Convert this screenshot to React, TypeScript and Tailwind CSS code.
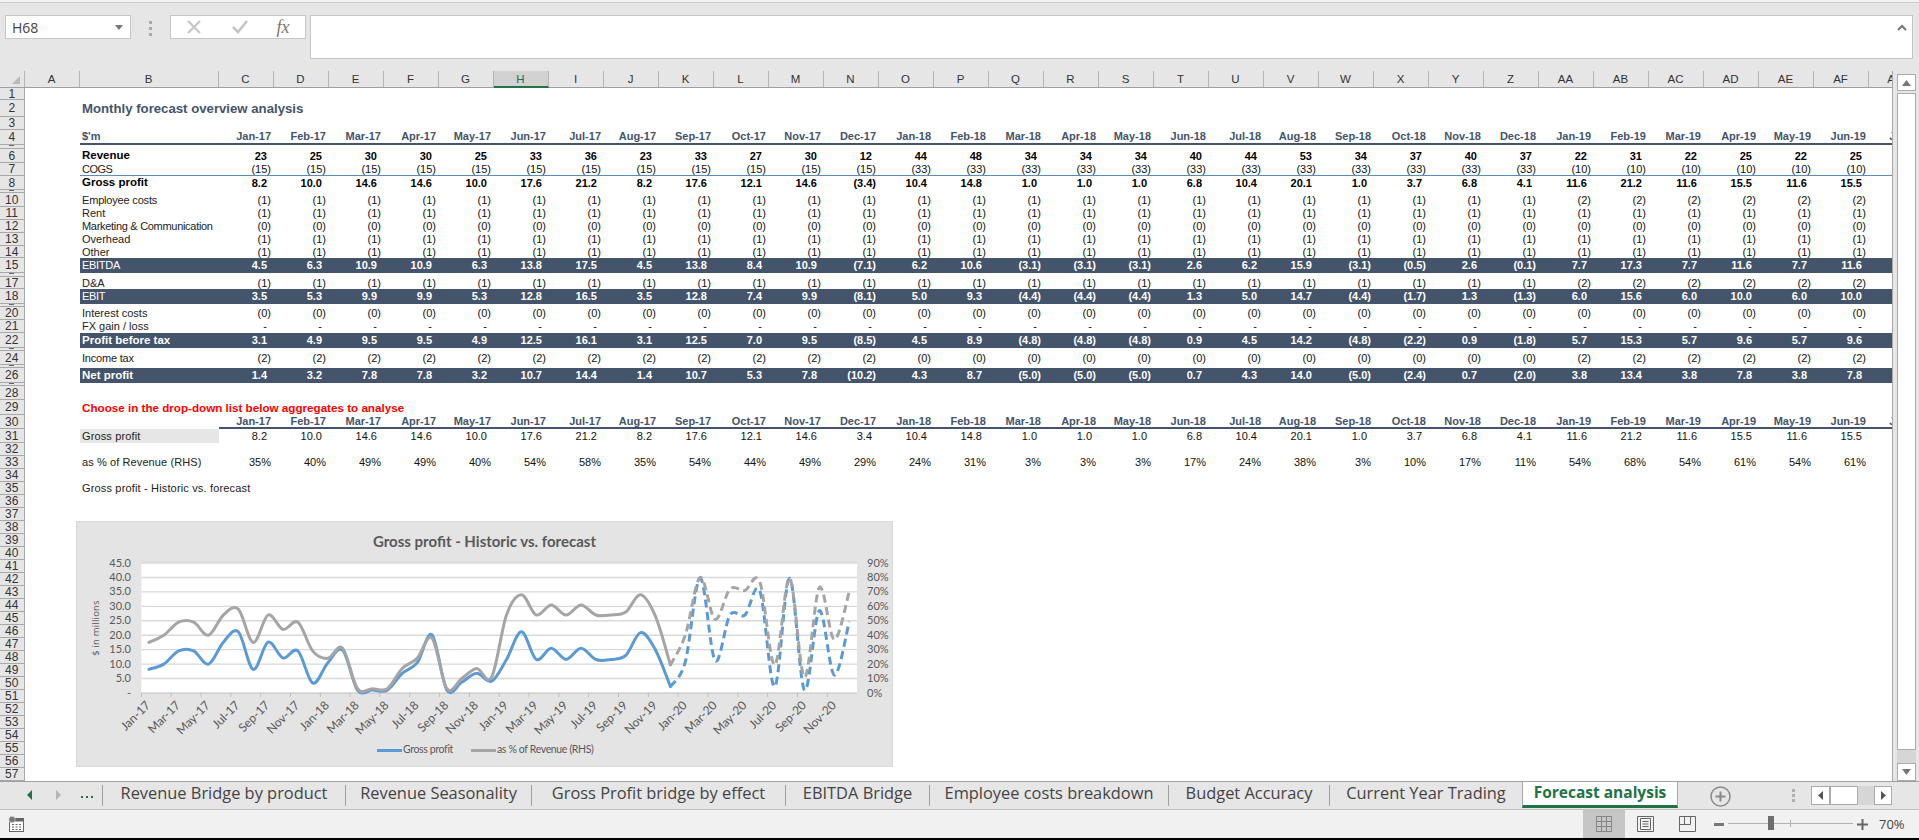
const MONTHS = [
  'Jan-17', 'Feb-17', 'Mar-17', 'Apr-17', 'May-17', 'Jun-17', 'Jul-17', 'Aug-17', 'Sep-17', 'Oct-17', 'Nov-17', 'Dec-17',
  'Jan-18', 'Feb-18', 'Mar-18', 'Apr-18', 'May-18', 'Jun-18', 'Jul-18', 'Aug-18', 'Sep-18', 'Oct-18', 'Nov-18', 'Dec-18',
  'Jan-19', 'Feb-19', 'Mar-19', 'Apr-19', 'May-19', 'Jun-19', 'Jul-19',
];

const COLUMNS = [
  'C', 'D', 'E', 'F', 'G', 'H', 'I', 'J', 'K', 'L', 'M', 'N', 'O', 'P', 'Q', 'R', 'S', 'T', 'U', 'V', 'W', 'X', 'Y', 'Z',
  'AA', 'AB', 'AC', 'AD', 'AE', 'AF', 'AG',
];

const rep = (v: string, n: number) => Array<string>(n).fill(v);
const split = (s: string) => s.split(' ');

const GROSS = split('8.2 10.0 14.6 14.6 10.0 17.6 21.2 8.2 17.6 12.1 14.6 (3.4) 10.4 14.8 1.0 1.0 1.0 6.8 10.4 20.1 1.0 3.7 6.8 4.1 11.6 21.2 11.6 15.5 11.6 15.5');
const PCT = [35, 40, 49, 49, 40, 54, 58, 35, 54, 44, 49, 29, 24, 31, 3, 3, 3, 17, 24, 38, 3, 10, 17, 11, 54, 68, 54, 61, 54, 61];

type Kind = 'blank' | 'title' | 'dates' | 'bold' | 'plain' | 'band' | 'bandBold' | 'red' | 'dates2' | 'select';

interface Row {
  n: number;
  h: string;
  kind: Kind;
  label?: string;
  vals?: string[];
  line?: boolean;
  track?: string;
  tiny?: boolean;
}

const blank = (n: number, h: string): Row => ({ n, h, kind: 'blank' });
const tiny = (n: number, h: string): Row => ({ n, h, kind: 'blank', tiny: true });

const ROWS: Row[] = [
  blank(1, 'h-[12px]'),
  { n: 2, h: 'h-[17px]', kind: 'title', label: 'Monthly forecast overview analysis' },
  blank(3, 'h-[13px]'),
  { n: 4, h: 'h-[15px]', kind: 'dates', label: "$'m", vals: MONTHS },
  tiny(5, 'h-[4px]'),
  { n: 6, h: 'h-[14px]', kind: 'bold', label: 'Revenue', vals: split('23 25 30 30 25 33 36 23 33 27 30 12 44 48 34 34 34 40 44 53 34 37 40 37 22 31 22 25 22 25') },
  { n: 7, h: 'h-[13px]', kind: 'plain', label: 'COGS', line: true, track: 'tracking-[-0.5px]', vals: [...rep('(15)', 12), ...rep('(33)', 12), ...rep('(10)', 6)] },
  { n: 8, h: 'h-[14px]', kind: 'bold', label: 'Gross profit', vals: GROSS },
  tiny(9, 'h-[3px]'),
  { n: 10, h: 'h-[14px]', kind: 'plain', label: 'Employee costs', track: 'tracking-[-0.18px]', vals: [...rep('(1)', 24), ...rep('(2)', 6)] },
  { n: 11, h: 'h-[13px]', kind: 'plain', label: 'Rent', vals: rep('(1)', 30) },
  { n: 12, h: 'h-[13px]', kind: 'plain', label: 'Marketing & Communication', track: 'tracking-[-0.3px]', vals: rep('(0)', 30) },
  { n: 13, h: 'h-[13px]', kind: 'plain', label: 'Overhead', vals: rep('(1)', 30) },
  { n: 14, h: 'h-[12px]', kind: 'plain', label: 'Other', vals: rep('(1)', 30) },
  { n: 15, h: 'h-[15px]', kind: 'band', label: 'EBITDA', vals: split('4.5 6.3 10.9 10.9 6.3 13.8 17.5 4.5 13.8 8.4 10.9 (7.1) 6.2 10.6 (3.1) (3.1) (3.1) 2.6 6.2 15.9 (3.1) (0.5) 2.6 (0.1) 7.7 17.3 7.7 11.6 7.7 11.6') },
  tiny(16, 'h-[4px]'),
  { n: 17, h: 'h-[12px]', kind: 'plain', label: 'D&A', vals: [...rep('(1)', 24), ...rep('(2)', 6)] },
  { n: 18, h: 'h-[15px]', kind: 'band', label: 'EBIT', vals: split('3.5 5.3 9.9 9.9 5.3 12.8 16.5 3.5 12.8 7.4 9.9 (8.1) 5.0 9.3 (4.4) (4.4) (4.4) 1.3 5.0 14.7 (4.4) (1.7) 1.3 (1.3) 6.0 15.6 6.0 10.0 6.0 10.0') },
  tiny(19, 'h-[3px]'),
  { n: 20, h: 'h-[13px]', kind: 'plain', label: 'Interest costs', vals: rep('(0)', 30) },
  { n: 21, h: 'h-[13px]', kind: 'plain', label: 'FX gain / loss', vals: rep('-', 30) },
  { n: 22, h: 'h-[15px]', kind: 'bandBold', label: 'Profit before tax', vals: split('3.1 4.9 9.5 9.5 4.9 12.5 16.1 3.1 12.5 7.0 9.5 (8.5) 4.5 8.9 (4.8) (4.8) (4.8) 0.9 4.5 14.2 (4.8) (2.2) 0.9 (1.8) 5.7 15.3 5.7 9.6 5.7 9.6') },
  tiny(23, 'h-[3px]'),
  { n: 24, h: 'h-[14px]', kind: 'plain', label: 'Income tax', track: 'tracking-[-0.2px]', vals: [...rep('(2)', 12), ...rep('(0)', 12), ...rep('(2)', 6)] },
  tiny(25, 'h-[3px]'),
  { n: 26, h: 'h-[15px]', kind: 'bandBold', label: 'Net profit', vals: split('1.4 3.2 7.8 7.8 3.2 10.7 14.4 1.4 10.7 5.3 7.8 (10.2) 4.3 8.7 (5.0) (5.0) (5.0) 0.7 4.3 14.0 (5.0) (2.4) 0.7 (2.0) 3.8 13.4 3.8 7.8 3.8 7.8') },
  tiny(27, 'h-[3px]'),
  blank(28, 'h-[14px]'),
  { n: 29, h: 'h-[15px]', kind: 'red', label: 'Choose in the drop-down list below aggregates to analyse' },
  { n: 30, h: 'h-[14px]', kind: 'dates2', vals: MONTHS },
  { n: 31, h: 'h-[14px]', kind: 'select', label: 'Gross profit', track: 'tracking-[0.13px]', vals: GROSS.map((v) => v.replace(/[()]/g, '')) },
  blank(32, 'h-[13px]'),
  { n: 33, h: 'h-[13px]', kind: 'plain', label: 'as % of Revenue (RHS)', track: 'tracking-[0.1px]', vals: PCT.map((p) => `${p}%`) },
  blank(34, 'h-[13px]'),
  { n: 35, h: 'h-[13px]', kind: 'plain', label: 'Gross profit - Historic vs. forecast', track: 'tracking-[0.16px]' },
  ...Array.from({ length: 22 }, (_, i) => blank(36 + i, 'h-[13px]')),
];

function Cell({ value, kind }: { value?: string; kind: Kind }) {
  const tight = !value || /[)%]$/.test(value) || kind === 'dates' || kind === 'dates2';
  const isBand = kind === 'band' || kind === 'bandBold';
  return (
    <div
      className={`flex w-[55px] shrink-0 items-center justify-end whitespace-nowrap ${tight ? 'pr-[2.5px]' : 'pr-[6.5px]'} ${
        isBand ? 'bg-[#44546a] font-bold text-white' : ''
      } ${kind === 'bold' ? 'font-bold text-black' : ''} ${kind === 'plain' || kind === 'select' ? 'text-[#111]' : ''} ${
        kind === 'dates' || kind === 'dates2' ? 'border-b-2 border-[#44546a] font-bold text-[#44546a]' : ''
      }`}
    >
      {value}
    </div>
  );
}

function SheetRow({ row }: { row: Row }) {
  const { kind } = row;
  const isBand = kind === 'band' || kind === 'bandBold';
  return (
    <div className={`flex ${row.h} text-[11px] leading-none`}>
      <div
        className={`flex w-[24.5px] shrink-0 justify-center overflow-hidden border-r border-b border-[#a8a8a8] bg-[#e6e6e6] text-[12px] text-[#333] ${
          row.tiny ? 'items-start' : 'items-center'
        }`}
      >
        {row.tiny ? <span className="h-px w-[5px] bg-[#666]" /> : row.n}
      </div>
      <div className="w-[55px] shrink-0" />
      <div
        className={`flex w-[139px] shrink-0 items-center whitespace-nowrap pl-[2.5px] ${row.track ?? ''} ${
          row.line ? 'border-b border-[#5b8db8]' : ''
        } ${kind === 'plain' || kind === 'select' ? 'text-[#222]' : ''} ${kind === 'select' ? 'bg-[#e6e6e6]' : ''} ${
          kind === 'bold' ? 'text-[11.5px] font-bold text-black' : ''
        } ${kind === 'title' ? 'text-[13.2px] font-bold text-[#44546a]' : ''} ${
          kind === 'dates' ? 'border-b-2 border-[#44546a] font-bold text-[#44546a]' : ''
        } ${isBand ? 'bg-[#44546a] text-white' : ''} ${kind === 'band' ? 'tracking-[-0.3px]' : ''} ${kind === 'bandBold' ? 'text-[11.5px] font-bold' : ''} ${
          kind === 'red' ? 'text-[11.65px] font-bold text-[#ff0000]' : ''
        }`}
      >
        {row.label}
      </div>
      {row.vals?.map((v, i) => (
        <div key={i} className={`flex ${row.line ? 'border-b border-[#5b8db8]' : ''}`}>
          <Cell value={v} kind={kind} />
        </div>
      ))}
      {row.vals && row.vals.length < 31 && (
        <div className={`w-[55px] shrink-0 ${isBand ? 'bg-[#44546a]' : ''} ${row.line ? 'border-b border-[#5b8db8]' : ''}`} />
      )}
    </div>
  );
}

function ColumnHeader() {
  return (
    <div className="flex h-[17px] shrink-0 border-b border-[#9f9f9f] bg-[#e6e6e6] text-[11.5px] leading-[16px] text-[#333]">
      <div className="relative w-[24.5px] shrink-0 border-r border-[#b4b4b4]">
        <svg className="absolute left-[11px] top-[4px]" width="10" height="10" viewBox="0 0 10 10">
          <polygon points="9,1 9,9 1,9" fill="#b9b9b9" />
        </svg>
      </div>
      <div className="w-[55px] shrink-0 border-r border-[#b4b4b4] text-center">A</div>
      <div className="w-[139px] shrink-0 border-r border-[#b4b4b4] text-center">B</div>
      {COLUMNS.map((c) => (
        <div
          key={c}
          className={`w-[55px] shrink-0 border-r border-[#b4b4b4] text-center ${
            c === 'H' ? 'h-[17px] border-b-2 border-b-[#217346] bg-[#d2d2d2] text-[#217346]' : ''
          }`}
        >
          {c}
        </div>
      ))}
    </div>
  );
}

/* ---- chart ---- */

const GP_ALL = [
  8.2, 10, 14.6, 14.6, 10, 17.6, 21.2, 8.2, 17.6, 12.1, 14.6, 3.4, 10.4, 14.8, 1, 1, 1, 6.8, 10.4, 20.1, 1, 3.7, 6.8, 4.1,
  11.6, 21.2, 11.6, 15.5, 11.6, 15.5, 11.6, 11.6, 13, 20.9, 14.9, 2.2, 10.8, 39.8, 11.2, 27, 27, 35.4, 2.2, 39.7, 1, 28.5, 6.2, 24.7,
];
const PCT_ALL = [
  ...PCT, 54, 54, 56, 68, 53, 19.4, 40, 80, 51, 72, 71, 77, 19.4, 79.5, 11, 73, 37, 70,
];

const px = (i: number) => 148.9 + 14.9 * i;
const gy = (v: number) => 693 - (v / 45) * 130;
const py = (p: number) => 693 - (p / 90) * 130;

function smooth(points: [number, number][]) {
  let d = `M${points[0][0]},${points[0][1]}`;
  for (let i = 0; i < points.length - 1; i++) {
    const p0 = points[i - 1] ?? points[i];
    const p1 = points[i];
    const p2 = points[i + 1];
    const p3 = points[i + 2] ?? p2;
    d += ` C${p1[0] + (p2[0] - p0[0]) / 6},${p1[1] + (p2[1] - p0[1]) / 6} ${p2[0] - (p3[0] - p1[0]) / 6},${p2[1] - (p3[1] - p1[1]) / 6} ${p2[0]},${p2[1]}`;
  }
  return d;
}

const gpPts = GP_ALL.map((v, i) => [px(i), gy(v)] as [number, number]);
const pctPts = PCT_ALL.map((v, i) => [px(i), py(v)] as [number, number]);

const X_LABELS = [
  'Jan-17', 'Mar-17', 'May-17', 'Jul-17', 'Sep-17', 'Nov-17', 'Jan-18', 'Mar-18', 'May-18', 'Jul-18', 'Sep-18', 'Nov-18',
  'Jan-19', 'Mar-19', 'May-19', 'Jul-19', 'Sep-19', 'Nov-19', 'Jan-20', 'Mar-20', 'May-20', 'Jul-20', 'Sep-20', 'Nov-20',
];
const LEFT_TICKS = ['-', '5.0', '10.0', '15.0', '20.0', '25.0', '30.0', '35.0', '40.0', '45.0'];

function Chart() {
  return (
    <div className="absolute left-[76px] top-[450px] flex h-[246px] w-[817px] flex-col border border-[#d9d9d9] bg-[#e4e4e4] font-['Lato',sans-serif]">
      <div className="h-[36px] pt-[10px] text-center text-[15px] font-bold leading-[18px] text-[#595959]">
        Gross profit - Historic vs. forecast
      </div>
      <svg width="815" height="184" viewBox="77 558 815 184" className="block shrink-0" fontFamily="Lato, sans-serif" fill="#595959">
        <rect x="141.4" y="563" width="715.6" height="130" fill="#fff" />
        {LEFT_TICKS.map((t, i) => {
          const y = 693 - i * 14.444;
          return (
            <g key={t}>
              {i > 0 && <line x1="141.4" x2="857" y1={y} y2={y} stroke="#d9d9d9" strokeWidth="1.4" />}
              <text x="131" y={y + 3.5} fontSize="11" textAnchor="end">{t}</text>
              <text x="867" y={y + 3.5} fontSize="11">{`${i * 10}%`}</text>
            </g>
          );
        })}
        <line x1="141.4" x2="857" y1="693" y2="693" stroke="#bfbfbf" />
        {X_LABELS.map((l, i) => (
          <g key={l}>
            <line x1={141.4 + i * 29.82} x2={141.4 + i * 29.82} y1="693" y2="697" stroke="#bfbfbf" />
            <text
              x={151 + i * 29.82}
              y={706}
              fontSize="12"
              textAnchor="end"
              transform={`rotate(-45 ${151 + i * 29.82} 706)`}
            >
              {l}
            </text>
          </g>
        ))}
        <text x="99" y="628" fontSize="9.5" letterSpacing="0.2" textAnchor="middle" transform="rotate(-90 99 628)" fontFamily="'Open Sans', sans-serif">
          $ in millions
        </text>
        <path d={smooth(gpPts.slice(0, 36))} fill="none" stroke="#5b9bd5" strokeWidth="3" strokeLinecap="round" />
        <path d={smooth(gpPts.slice(35))} fill="none" stroke="#5b9bd5" strokeWidth="3" strokeDasharray="8 4.5" />
        <path d={smooth(pctPts.slice(0, 36))} fill="none" stroke="#a5a5a5" strokeWidth="3" strokeLinecap="round" />
        <path d={smooth(pctPts.slice(35))} fill="none" stroke="#a5a5a5" strokeWidth="3" strokeDasharray="8 4.5" />
      </svg>
      <div className="ml-[300px] mt-[1px] flex h-[14px] items-center text-[10.5px] tracking-[-0.35px] text-[#595959]">
        <span className="h-[3px] w-[25px] bg-[#5b9bd5]" />
        <span className="ml-[1px] w-[68px]">Gross profit</span>
        <span className="h-[3px] w-[25px] bg-[#a5a5a5]" />
        <span className="ml-[1px]">as % of Revenue (RHS)</span>
      </div>
    </div>
  );
}

/* ---- chrome ---- */

function FormulaBar() {
  return (
    <div className="shrink-0">
      <div className="h-[3px] border-b border-[#cfcfcf] bg-[#f1f1f1]" />
      <div className="flex h-[68px] items-start bg-[#e6e6e6] pl-[5px] pt-[12px]">
        <div className="flex h-[24px] w-[126px] items-center justify-between border border-[#c6c6c6] bg-white pl-[6px] pr-[7px] font-['Open_Sans',sans-serif] text-[14px] text-[#444]">
          H68
          <svg width="8" height="5" viewBox="0 0 8 5">
            <polygon points="0,0 8,0 4,5" fill="#777" />
          </svg>
        </div>
        <div className="ml-[18px] mr-[18px] mt-[6px] flex flex-col gap-[3px]">
          <span className="h-[3px] w-[2.5px] bg-[#aaa]" />
          <span className="h-[3px] w-[2.5px] bg-[#aaa]" />
          <span className="h-[3px] w-[2.5px] bg-[#aaa]" />
        </div>
        <div className="flex h-[24px] w-[136px] items-center border border-[#c6c6c6] bg-white pl-[16px]">
          <svg width="14" height="14" viewBox="0 0 14 14" fill="none" stroke="#c4c4c4" strokeWidth="2">
            <path d="M1 1 13 13M13 1 1 13" />
          </svg>
          <svg className="ml-[31px]" width="16" height="14" viewBox="0 0 16 14" fill="none" stroke="#c4c4c4" strokeWidth="2.6">
            <path d="M1 7 6 12 15 1" />
          </svg>
          <span className="ml-[29px] font-['Liberation_Serif',serif] text-[18px] italic leading-none text-[#777]">fx</span>
        </div>
        <div className="ml-[4px] flex h-[44px] w-[1603px] justify-end border border-[#c6c6c6] bg-white pr-[5px] pt-[8px]">
          <svg width="10" height="7" viewBox="0 0 10 7" fill="none" stroke="#777" strokeWidth="2">
            <path d="M1 6 5 2 9 6" />
          </svg>
        </div>
      </div>
    </div>
  );
}

function VerticalScrollbar() {
  return (
    <div className="flex h-[710px] w-[26px] shrink-0 flex-col bg-[#e6e6e6] pl-[4px] pr-[3px] pt-[3px]">
      <div className="flex h-[17px] items-center justify-center border border-[#ababab] bg-white">
        <svg width="9" height="6" viewBox="0 0 9 6">
          <polygon points="0,6 9,6 4.5,0" fill="#777" />
        </svg>
      </div>
      <div className="mt-[2px] h-[657px] border border-[#ababab] bg-white" />
      <div className="h-[13px] bg-[#d6d6d6]" />
      <div className="flex h-[18px] items-center justify-center border border-[#ababab] bg-white">
        <svg width="9" height="6" viewBox="0 0 9 6">
          <polygon points="0,0 9,0 4.5,6" fill="#777" />
        </svg>
      </div>
    </div>
  );
}

const TABS = [
  { label: 'Revenue Bridge by product', w: 'w-[243px]' },
  { label: 'Revenue Seasonality', w: 'w-[186px]' },
  { label: 'Gross Profit bridge by effect', w: 'w-[254px]' },
  { label: 'EBITDA Bridge', w: 'w-[144px]' },
  { label: 'Employee costs breakdown', w: 'w-[239px]' },
  { label: 'Budget Accuracy', w: 'w-[161px]' },
  { label: 'Current Year Trading', w: 'w-[193px]' },
];

function TabBar() {
  return (
    <div className="flex h-[29px] shrink-0 items-start border-t border-[#a0a0a0] border-b border-b-[#c0c0c0] bg-[#e6e6e6] font-['Open_Sans',sans-serif]">
      <div className="relative flex h-[26px] w-[102px] shrink-0 items-center pl-[27px]">
        <svg width="5" height="10" viewBox="0 0 5 10">
          <polygon points="5,0 5,10 0,5" fill="#217346" />
        </svg>
        <svg className="ml-[24px]" width="5" height="10" viewBox="0 0 5 10">
          <polygon points="0,0 0,10 5,5" fill="#b5b5b5" />
        </svg>
        <div className="ml-[20px] mt-[4px] flex gap-[3px]">
          <span className="h-[2px] w-[2px] bg-[#217346]" />
          <span className="h-[2px] w-[2px] bg-[#217346]" />
          <span className="h-[2px] w-[2px] bg-[#217346]" />
        </div>
      </div>
      {TABS.map((t) => (
        <div
          key={t.label}
          className={`${t.w} mt-[3px] h-[21px] shrink-0 whitespace-nowrap border-l border-[#a0a0a0] text-center text-[16.4px] leading-[16px] text-[#444]`}
        >
          {t.label}
        </div>
      ))}
      <div className="h-[26px] w-[156px] shrink-0 whitespace-nowrap border-x border-[#a8a8a8] border-b-[3px] border-b-[#217346] bg-white text-center text-[15.5px] font-bold leading-[21px] text-[#217346]">
        Forecast analysis
      </div>
      <svg className="ml-[32px] mt-[4px] shrink-0" width="21" height="21" viewBox="0 0 21 21" fill="none" stroke="#8a8a8a">
        <circle cx="10.5" cy="10.5" r="9.5" strokeWidth="1.5" />
        <path d="M10.5 5.5v10M5.5 10.5h10" strokeWidth="2" />
      </svg>
      <div className="ml-[61px] mt-[7px] flex flex-col gap-[2px]">
        <span className="h-[3px] w-[3px] bg-[#b0b0b0]" />
        <span className="h-[3px] w-[3px] bg-[#b0b0b0]" />
        <span className="h-[3px] w-[3px] bg-[#b0b0b0]" />
      </div>
      <div className="ml-[16px] mt-[4px] flex h-[19px]">
        <div className="flex w-[19px] items-center justify-center border border-[#ababab] bg-white">
          <svg width="5" height="9" viewBox="0 0 5 9">
            <polygon points="5,0 5,9 0,4.5" fill="#555" />
          </svg>
        </div>
        <div className="w-[28px] border border-[#ababab] bg-white" />
        <div className="w-[16px] bg-[#d6d6d6]" />
        <div className="flex w-[18px] items-center justify-center border border-[#ababab] bg-white">
          <svg width="5" height="9" viewBox="0 0 5 9">
            <polygon points="0,0 0,9 5,4.5" fill="#555" />
          </svg>
        </div>
      </div>
    </div>
  );
}

function StatusBar() {
  return (
    <div className="flex h-[28px] shrink-0 items-center bg-[#f1f1f1] pl-[8px] font-['Open_Sans',sans-serif]">
      <svg width="16" height="16" viewBox="0 0 16 16" fill="none" stroke="#666">
        <rect x="1.5" y="2.5" width="14" height="13" fill="#fff" />
        <rect x="1" y="2" width="15" height="3.5" fill="#666" stroke="none" />
        <circle cx="4" cy="3.5" r="3.2" fill="#777" stroke="#f1f1f1" strokeWidth="0.5" />
        <path d="M4 8.5h2M7.5 8.5h2M11 8.5h2M4 11h2M7.5 11h2M11 11h2M4 13.5h2M7.5 13.5h2M11 13.5h2" />
      </svg>
      <div className="ml-[1559px] flex h-[28px] w-[42px] items-center justify-center bg-[#c6c6c6]">
        <svg width="16" height="16" viewBox="0 0 16 16" fill="none" stroke="#858585">
          <path d="M.5.5h15v15H.5zM5.5.5v15M10.5.5v15M.5 5.5h15M.5 10.5h15" />
        </svg>
      </div>
      <svg className="ml-[12px]" width="17" height="16" viewBox="0 0 17 16" fill="none" stroke="#666">
        <path d="M.5.5h16v15H.5zM3.5 2.5h10v11h-10zM5.5 5.5h6M5.5 8h6M5.5 10.5h6" />
      </svg>
      <svg className="ml-[25px]" width="17" height="16" viewBox="0 0 17 16" fill="none" stroke="#666">
        <path d="M.5.5h16v15H.5zM.5 8.5h11M5.5.5v8M11.5.5v8" />
      </svg>
      <div className="ml-[18px] h-[3px] w-[10px] bg-[#777]" />
      <div className="relative ml-[4px] h-[16px] w-[125px]">
        <div className="absolute left-0 right-0 top-[7px] h-px bg-[#b0b0b0]" />
        <div className="absolute left-[62px] top-[4px] h-[7px] w-px bg-[#b0b0b0]" />
        <div className="absolute left-[40px] top-0 h-[14px] w-[6px] bg-[#6e6e6e]" />
      </div>
      <svg className="ml-[4px]" width="11" height="11" viewBox="0 0 11 11" fill="#666">
        <path d="M4.5 0h2v4.5H11v2H6.5V11h-2V6.5H0v-2h4.5z" />
      </svg>
      <span className="ml-[11px] text-[13px] leading-none text-[#444]">70%</span>
    </div>
  );
}

export default function App() {
  return (
    <div className="flex h-[840px] w-[1919px] flex-col overflow-hidden bg-white font-['Liberation_Sans',Arial,sans-serif]">
      <FormulaBar />
      <div className="flex h-[710px] shrink-0">
        <div className="relative flex h-[710px] w-[1893px] shrink-0 flex-col overflow-hidden border-r border-[#a8a8a8]">
          <ColumnHeader />
          {ROWS.map((r) => (
            <SheetRow key={r.n} row={r} />
          ))}
          <Chart />
        </div>
        <VerticalScrollbar />
      </div>
      <TabBar />
      <StatusBar />
      <div className="h-[2px] shrink-0 bg-black" />
    </div>
  );
}
